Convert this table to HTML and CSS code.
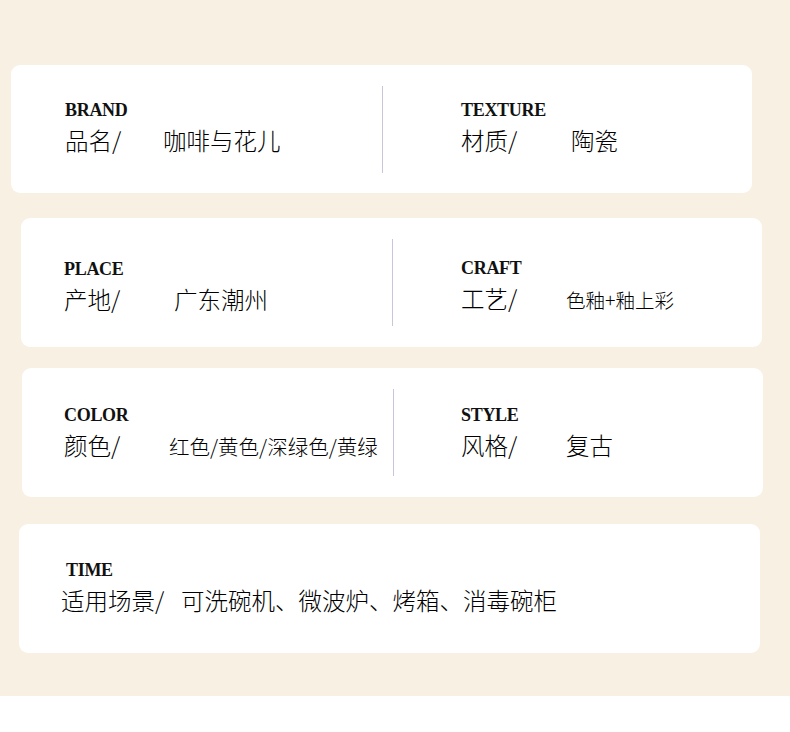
FILE: index.html
```html
<!DOCTYPE html>
<html lang="zh-CN">
<head>
<meta charset="utf-8">
<title>产品信息</title>
<link rel="stylesheet" href="styles.css">
</head>
<body>
<div class="sheet">
  <div class="card card--one">
    <div class="info info--left">
      <div class="en">BRAND</div>
      <div class="zh"><span class="key k98">品名/</span><span class="val">咖啡与花儿</span></div>
    </div>
    <div class="divider"></div>
    <div class="info info--right">
      <div class="en">TEXTURE</div>
      <div class="zh"><span class="key k110">材质/</span><span class="val">陶瓷</span></div>
    </div>
  </div>

  <div class="card card--two">
    <div class="info info--left">
      <div class="en">PLACE</div>
      <div class="zh"><span class="key k110">产地/</span><span class="val">广东潮州</span></div>
    </div>
    <div class="divider"></div>
    <div class="info info--right">
      <div class="en">CRAFT</div>
      <div class="zh"><span class="key k105">工艺/</span><span class="val val--craft">色釉+釉上彩</span></div>
    </div>
  </div>

  <div class="card card--three">
    <div class="info info--left">
      <div class="en">COLOR</div>
      <div class="zh"><span class="key k105">颜色/</span><span class="val val--color">红色/黄色/深绿色/黄绿</span></div>
    </div>
    <div class="divider"></div>
    <div class="info info--right">
      <div class="en">STYLE</div>
      <div class="zh"><span class="key k105">风格/</span><span class="val">复古</span></div>
    </div>
  </div>

  <div class="card card--four">
    <div class="info info--wide">
      <div class="en en--time">TIME</div>
      <div class="zh"><span class="key k120">适用场景/</span><span class="val">可洗碗机、微波炉、烤箱、消毒碗柜</span></div>
    </div>
  </div>
</div>
</body>
</html>
```

FILE: styles.css
```css
* { box-sizing: border-box; }

html, body {
  margin: 0;
  padding: 0;
  background: #ffffff;
}

.sheet {
  background: #f7f0e3;
  height: 696px;
  padding-top: 65px;
  display: flex;
  flex-direction: column;
}

.card {
  width: 741px;
  height: 129px;
  background: #ffffff;
  border-radius: 9px;
  display: flex;
  align-items: center;
  flex-shrink: 0;
}

.card--one {
  height: 128px;
  margin-left: 11px;
  margin-bottom: 25px;
  padding-left: 54px;
  --lw: 317px;
  --rp: 78px;
  --shift: 4px;
}

.card--two {
  margin-left: 21px;
  margin-bottom: 21px;
  padding-left: 43px;
  --lw: 328px;
  --rp: 68px;
  --shift: -7px;
}

.card--three {
  margin-left: 22px;
  margin-bottom: 27px;
  padding-left: 42px;
  --lw: 329px;
  --rp: 67px;
  --shift: 0px;
}

.card--four {
  margin-left: 19px;
  padding-left: 42px;
  --shift: 2px;
}

.info {
  display: flex;
  flex-direction: column;
  margin-bottom: var(--shift);
}

.info--left { width: var(--lw); flex-shrink: 0; }
.info--right { padding-left: var(--rp); }

.divider {
  width: 1px;
  height: 87px;
  background: #c9c6db;
  flex-shrink: 0;
}

.en {
  font-family: "Liberation Serif", "Times New Roman", serif;
  font-weight: bold;
  font-size: 18px;
  line-height: 20px;
  color: #111111;
  letter-spacing: -0.3px;
}

.en--time { padding-left: 5px; }

.zh {
  margin-top: 5px;
  font-family: "Noto Sans CJK SC", "Noto Sans", sans-serif;
  font-weight: 300;
  font-size: 23.5px;
  line-height: 30px;
  color: #000000;
  white-space: nowrap;
  display: flex;
  align-items: baseline;
}

.key { display: inline-block; flex-shrink: 0; }
.k98 { width: 98px; }
.k105 { width: 105px; }
.k110 { width: 110px; }
.k120 { width: 120px; }

.val--craft { font-size: 19.5px; }
.val--color { font-size: 20.5px; }
```
